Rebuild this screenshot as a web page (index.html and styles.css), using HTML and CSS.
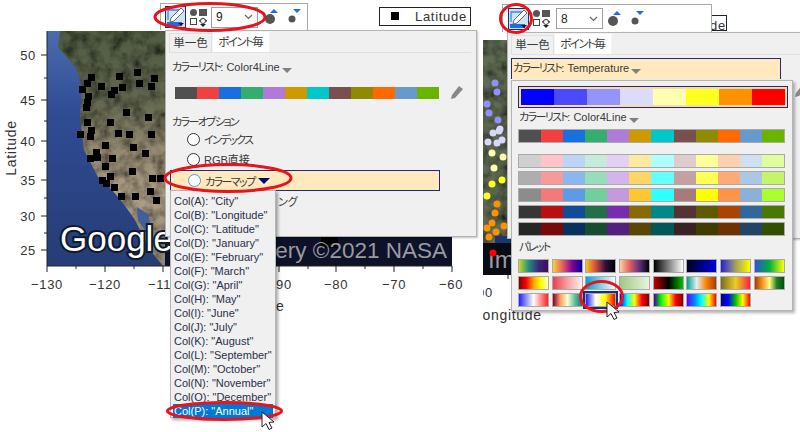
FILE: index.html
```html
<!DOCTYPE html>
<html lang="ja">
<head>
    <meta charset="utf-8">
    <title>カラーマップ</title>
    <link rel="stylesheet" href="styles.css">
</head>
<body>
<div class="desk">

    <!-- the two graphs behind the dialogs -->
    <svg class="chart" width="800" height="432" viewBox="0 0 800 432">
        <defs>
            <linearGradient id="sea" x1="0" y1="0" x2="0" y2="1">
                <stop offset="0" stop-color="#4c6cae"/>
                <stop offset=".35" stop-color="#2f4c94"/>
                <stop offset="1" stop-color="#263c74"/>
            </linearGradient>
            <linearGradient id="land" x1="0" y1="0" x2="0" y2="1">
                <stop offset="0" stop-color="#4f5c42"/>
                <stop offset=".3" stop-color="#646850"/>
                <stop offset=".5" stop-color="#938870"/>
                <stop offset=".7" stop-color="#ae9f86"/>
                <stop offset="1" stop-color="#8f8672"/>
            </linearGradient>
            <filter id="terrain" x="0" y="0" width="100%" height="100%">
                <feTurbulence type="fractalNoise" baseFrequency=".09" numOctaves="3" seed="4"/>
                <feColorMatrix values="0 0 0 0 0  0 0 0 0 0  0 0 0 0 0  1.6 0 0 0 -.55"/>
                <feComposite in2="SourceAlpha" operator="in"/>
                <feMerge>
                    <feMergeNode in="SourceGraphic"/>
                    <feMergeNode/>
                </feMerge>
            </filter>
            <filter id="soft"><feGaussianBlur stdDeviation=".7"/></filter>
            <clipPath id="right-clip"><rect x="483" y="30" width="60" height="300"/></clipPath>
        </defs>

        <!-- left map -->
        <rect x="47" y="31" width="405" height="235" fill="url(#sea)"/>
        <path class="land" d="M60 31 L58 47 L66 56 L77 70 L82 87 L80 117 L82 133 L84 150 L98 177 L112 190 L123 203 L135 220 L150 250 L163 266 L452 266 L452 31 Z"/>
        <path d="M137 207 L148 214 L153 236 L146 232 L138 220 Z" fill="#3f5f9c" filter="url(#soft)"/>
        <g class="pts">
            <rect x="134" y="69" width="7" height="7"/><rect x="116" y="73" width="7" height="7"/><rect x="151" y="75" width="7" height="7"/>
            <rect x="88" y="74" width="7" height="7"/><rect x="84" y="80" width="7" height="7"/><rect x="79" y="86" width="7" height="7"/>
            <rect x="98" y="83" width="7" height="7"/><rect x="85" y="93" width="7" height="7"/><rect x="84" y="99" width="7" height="7"/>
            <rect x="83" y="104" width="7" height="7"/><rect x="119" y="84" width="7" height="7"/><rect x="111" y="87" width="7" height="7"/>
            <rect x="108" y="91" width="7" height="7"/><rect x="136" y="80" width="7" height="7"/><rect x="148" y="83" width="7" height="7"/>
            <rect x="123" y="109" width="7" height="7"/><rect x="145" y="114" width="7" height="7"/><rect x="84" y="119" width="7" height="7"/>
            <rect x="107" y="119" width="7" height="7"/><rect x="88" y="127" width="7" height="7"/><rect x="77" y="131" width="7" height="7"/>
            <rect x="87" y="133" width="7" height="7"/><rect x="115" y="130" width="7" height="7"/><rect x="126" y="131" width="7" height="7"/>
            <rect x="148" y="131" width="7" height="7"/><rect x="102" y="142" width="7" height="7"/><rect x="130" y="144" width="7" height="7"/>
            <rect x="142" y="150" width="7" height="7"/><rect x="93" y="149" width="7" height="7"/><rect x="87" y="155" width="7" height="7"/>
            <rect x="94" y="154" width="7" height="7"/><rect x="109" y="155" width="7" height="7"/><rect x="102" y="163" width="7" height="7"/>
            <rect x="129" y="168" width="7" height="7"/><rect x="107" y="173" width="7" height="7"/><rect x="99" y="177" width="7" height="7"/>
            <rect x="103" y="180" width="7" height="7"/><rect x="111" y="184" width="7" height="7"/><rect x="149" y="175" width="7" height="7"/>
            <rect x="157" y="175" width="7" height="7"/><rect x="147" y="188" width="7" height="7"/><rect x="118" y="193" width="7" height="7"/>
            <rect x="132" y="193" width="7" height="7"/><rect x="153" y="197" width="7" height="7"/>
        </g>
        <rect x="165" y="236" width="287" height="30" fill="#0d1228"/>
        <g class="pts"><rect x="321" y="237" width="9" height="11"/><rect x="329" y="237" width="9" height="11"/></g>
        <text class="credit" x="447" y="258" text-anchor="end">ery ©2021 NASA</text>
        <text class="google" x="60" y="251">Google</text>

        <!-- left axes -->
        <g class="axis">
            <path d="M47 31V266H452"/>
            <path d="M41 55H47M41 100H47M41 141H47M41 180H47M41 216H47M41 250H47M44 78H47M44 121H47M44 161H47M44 198H47M44 233H47"/>
            <path d="M47 266V272M105 266V272M163 266V272M279 266V272M336 266V272M394 266V272M452 266V272M76 266V269M134 266V269M308 266V269M365 266V269M423 266V269"/>
        </g>
        <g class="ticks" text-anchor="end">
            <text x="36" y="60">50</text><text x="36" y="105">45</text><text x="36" y="146">40</text>
            <text x="36" y="185">35</text><text x="36" y="221">30</text><text x="36" y="255">25</text>
        </g>
        <g class="ticks" text-anchor="middle">
            <text x="47" y="289">−130</text><text x="105" y="289">−120</text>
            <text x="336" y="289">−80</text><text x="394" y="289">−70</text><text x="451" y="289">−60</text>
            <text class="title" transform="translate(16 148) rotate(-90)">Latitude</text>
        </g>
        <g class="ticks">
            <text x="148" y="289">−11</text>
            <text x="276" y="289">90</text>
            <text class="title" x="276" y="311">e</text>
        </g>
        <rect class="legend" x="379.500" y="7.500" width="91" height="18"/>
        <rect x="391" y="12" width="8" height="8"/>
        <text class="ticks" x="415" y="21">Latitude</text>

        <!-- right graph, only a strip of it shows -->
        <rect class="land-flat" x="483" y="40" width="28" height="203"/>
        <rect x="495" y="236" width="16" height="7" fill="#1f3570"/>
        <rect x="483" y="243" width="28" height="32" fill="#0a0c14"/>
        <text class="credit wide" x="488" y="268">Im</text>
        <circle cx="493" cy="253" r="3.500" fill="#f00"/>
        <g fill="#8f8fff">
            <circle cx="495" cy="83" r="3.500"/><circle cx="497" cy="92" r="3.500"/><circle cx="487" cy="104" r="3.500"/>
            <circle cx="489" cy="113" r="3.500"/><circle cx="498" cy="120" r="3.500"/>
        </g>
        <g fill="#d8d8ff">
            <circle cx="493" cy="133" r="3.500"/><circle cx="500" cy="129" r="3.500"/><circle cx="499" cy="131" r="3.500"/>
            <circle cx="488" cy="142" r="3.500"/><circle cx="497" cy="143" r="3.500"/><circle cx="502" cy="140" r="3.500"/>
        </g>
        <g fill="#ffffb0">
            <circle cx="492" cy="153" r="3.500"/><circle cx="503" cy="157" r="3.500"/><circle cx="494" cy="168" r="3.500"/>
        </g>
        <g fill="#ffff20">
            <circle cx="492" cy="184" r="3.500"/><circle cx="502" cy="180" r="3.500"/><circle cx="487" cy="196" r="3.500"/>
        </g>
        <g fill="#ff9000">
            <circle cx="497" cy="204" r="3.500"/><circle cx="495" cy="213" r="3.500"/><circle cx="492" cy="223" r="3.500"/>
            <circle cx="487" cy="228" r="3.500"/><circle cx="496" cy="232" r="3.500"/><circle cx="489" cy="237" r="3.500"/>
            <circle cx="504" cy="226" r="3.500"/>
        </g>
        <g class="axis"><path d="M508 275V279"/></g>
        <g class="ticks" clip-path="url(#right-clip)">
            <text x="477" y="297">00</text>
            <text class="title" x="474" y="320">Longitude</text>
        </g>
        <rect class="legend" x="640.500" y="15.500" width="86" height="15"/>
        <text class="ticks" x="710" y="30">de</text>
    </svg>

    <!-- left dialog -->
    <div class="toolbar toolbar-left">
        <button class="pick"><svg width="19" height="20" viewBox="0 0 19 20"><path d="M2 13V3H13" fill="none" stroke="#3b8ad8" stroke-width="1.300"/><path d="M15 1 L18 4 L8 14 L4 15 L5 11 Z" fill="#fff" stroke="#666"/><rect x="1" y="15" width="15" height="4" fill="#1a6fe0"/><path d="M12 16H18L15 19Z" fill="#111"/></svg></button>
        <span class="shapes"><svg width="19" height="19" viewBox="0 0 19 19"><circle cx="4.500" cy="4.500" r="3.500" fill="#555"/><rect x="10" y="1" width="8" height="7" fill="#555"/><rect x="1.500" y="10.500" width="6" height="6" fill="#fff" stroke="#444"/><path d="M10 13 L14 10 L18 13 Z" fill="none" stroke="#444"/><circle cx="14" cy="13" r="2.500" fill="#fff" stroke="#444"/><path d="M11 16H17L14 19Z" fill="#222"/></svg></span>
        <span class="combo"><span>9</span><svg width="9" height="6" viewBox="0 0 9 6"><path d="M1 1 L4.500 4.500 L8 1" fill="none" stroke="#666" stroke-width="1.200"/></svg></span>
        <svg class="mark" width="20" height="18" viewBox="0 0 20 18"><circle cx="7" cy="11" r="5" fill="#555"/><path d="M7 4 L11 0 L15 4Z" fill="#1a6fe0" transform="translate(0 1)"/></svg>
        <svg class="mark" width="20" height="18" viewBox="0 0 20 18"><circle cx="7" cy="11" r="3.500" fill="#555"/><path d="M8 1H16L12 5Z" fill="#1a6fe0"/></svg>
    </div>

    <div class="popup popup-left">
        <div class="tabs">
            <span class="tab">単一色</span>
            <span class="tab active"><span class="kana">ポイント</span>毎</span>
        </div>
        <div class="label"><span class="kana">カラーリスト</span>: Color4Line<i class="caret"></i></div>
        <div class="swatch-row">
            <div class="ramp base"></div>
            <svg class="pen" width="14" height="16" viewBox="0 0 14 16"><path d="M9 1 L13 4 L5 13 L1 14 L2 10 Z" fill="#888"/></svg>
        </div>
        <div class="section"><span class="kana">カラーオプション</span></div>
        <div class="options">
            <div class="option"><i class="radio"></i><span class="kana">インデックス</span></div>
            <div class="option"><i class="radio"></i>RGB直接</div>
            <div class="option current"><i class="radio"></i><span class="kana">カラーマップ</span><i class="caret navy"></i></div>
            <div class="option tail">ング</div>
        </div>
        <ul class="columns">
            <li>Col(A): "City"</li>
            <li>Col(B): "Longitude"</li>
            <li>Col(C): "Latitude"</li>
            <li>Col(D): "January"</li>
            <li>Col(E): "February"</li>
            <li>Col(F): "March"</li>
            <li>Col(G): "April"</li>
            <li>Col(H): "May"</li>
            <li>Col(I): "June"</li>
            <li>Col(J): "July"</li>
            <li>Col(K): "August"</li>
            <li>Col(L): "September"</li>
            <li>Col(M): "October"</li>
            <li>Col(N): "November"</li>
            <li>Col(O): "December"</li>
            <li class="picked">Col(P): "Annual"</li>
        </ul>
    </div>

    <!-- right dialog -->
    <div class="toolbar toolbar-right">
        <button class="pick"><svg width="19" height="20" viewBox="0 0 19 20"><path d="M2 13V3H13" fill="none" stroke="#3b8ad8" stroke-width="1.300"/><path d="M15 1 L18 4 L8 14 L4 15 L5 11 Z" fill="#fff" stroke="#666"/><rect x="1" y="15" width="15" height="4" fill="#1a6fe0"/><path d="M12 16H18L15 19Z" fill="#111"/></svg></button>
        <span class="shapes"><svg width="19" height="19" viewBox="0 0 19 19"><circle cx="4.500" cy="4.500" r="3.500" fill="#555"/><rect x="10" y="1" width="8" height="7" fill="#555"/><rect x="1.500" y="10.500" width="6" height="6" fill="#fff" stroke="#444"/><path d="M10 13 L14 10 L18 13 Z" fill="none" stroke="#444"/><circle cx="14" cy="13" r="2.500" fill="#fff" stroke="#444"/><path d="M11 16H17L14 19Z" fill="#222"/></svg></span>
        <span class="combo"><span>8</span><svg width="9" height="6" viewBox="0 0 9 6"><path d="M1 1 L4.500 4.500 L8 1" fill="none" stroke="#666" stroke-width="1.200"/></svg></span>
        <svg class="mark" width="20" height="18" viewBox="0 0 20 18"><circle cx="7" cy="11" r="5" fill="#555"/><path d="M7 4 L11 0 L15 4Z" fill="#1a6fe0" transform="translate(0 1)"/></svg>
        <svg class="mark" width="20" height="18" viewBox="0 0 20 18"><circle cx="7" cy="11" r="3.500" fill="#555"/><path d="M8 1H16L12 5Z" fill="#1a6fe0"/></svg>
    </div>

    <div class="popup popup-right">
        <div class="tabs">
            <span class="tab">単一色</span>
            <span class="tab active"><span class="kana">ポイント</span>毎</span>
        </div>
        <div class="label current-list"><span class="kana">カラーリスト</span>: Temperature<i class="caret"></i></div>
        <svg class="pen pen-edge" width="14" height="16" viewBox="0 0 14 16"><path d="M9 1 L13 4 L5 13 L1 14 L2 10 Z" fill="#888"/></svg>
        <div class="lists">
            <div class="selected-ramp"><div class="ramp temperature"></div></div>
            <div class="label sub"><span class="kana">カラーリスト</span>: Color4Line<i class="caret"></i></div>
            <div class="ramp base framed"></div>
            <div class="tints">
                <div class="ramp tint1 framed"></div>
                <div class="ramp tint2 framed"></div>
                <div class="ramp tint3 framed"></div>
                <div class="ramp shade1 framed"></div>
                <div class="ramp shade2 framed"></div>
            </div>
            <div class="label palette-title"><span class="kana">パレット</span></div>
            <div class="palettes">
                <i class="p1"></i><i class="p2"></i><i class="p3"></i><i class="p4"></i><i class="p5"></i><i class="p6"></i><i class="p7"></i><i class="p8"></i>
                <i class="p9"></i><i class="p10"></i><i class="p11"></i><i class="p12"></i><i class="p13"></i><i class="p14"></i><i class="p15"></i><i class="p16"></i>
                <i class="p17"></i><i class="p18"></i><i class="p19 on"></i><i class="p20"></i><i class="p21"></i><i class="p22"></i><i class="p23"></i>
            </div>
        </div>
    </div>

    <!-- red rings and mouse pointers drawn over everything -->
    <svg class="marks" width="800" height="432" viewBox="0 0 800 432">
        <g class="ring">
            <ellipse cx="210" cy="17" rx="55" ry="13.500"/>
            <ellipse cx="228" cy="178" rx="63" ry="13.500"/>
            <ellipse cx="224.500" cy="411" rx="57" ry="8.500"/>
            <ellipse cx="516" cy="18.500" rx="15.500" ry="14"/>
            <ellipse cx="601.500" cy="296.500" rx="21" ry="15"/>
        </g>
        <path class="arrow" d="M262 412V427L266 423.500L269 429.500L272 428L269 422.500L274 422Z"/>
        <path class="arrow" d="M607 302V317L611 313.500L614 319.500L617 318L614 312.500L619 312Z"/>
    </svg>
</div>
</body>
</html>
```

FILE: styles.css
```css
* {
    box-sizing: border-box;
}
body {
    margin: 0;
    background: #fff;
    font-family: "Liberation Sans", "Noto Sans CJK JP", sans-serif;
    font-size: 11px;
    color: #3a3a3a;
}
i {
    display: inline-block;
}
.desk {
    position: relative;
    width: 800px;
    height: 432px;
    overflow: hidden;
}

/* graphs */
.chart,
.marks {
    position: absolute;
    left: 0;
    top: 0;
}
.land {
    fill: url(#land);
    filter: url(#terrain);
}
.land-flat {
    fill: #5f6a52;
    filter: url(#terrain);
}
.pts {
    fill: #000;
}
.axis path {
    fill: none;
    stroke: #222;
    stroke-width: 1;
}
.ticks text,
text.ticks {
    font-size: 13px;
    letter-spacing: .7px;
    fill: #333;
}
.ticks .title {
    font-size: 14px;
}
.legend {
    fill: #fff;
    stroke: #222;
}
.credit {
    font-size: 22.500px;
    fill: #9a9aa2;
}
.credit.wide {
    font-size: 24px;
}
.google {
    font-size: 35px;
    fill: #fff;
    stroke: #10182c;
    stroke-width: 4px;
    paint-order: stroke;
}

/* toolbars */
.toolbar {
    position: absolute;
    display: flex;
    align-items: center;
    height: 27px;
    padding-left: 4px;
    background: #fff;
    border: 1px solid #a8a8a8;
    border-bottom: 0;
}
.toolbar-left {
    left: 160px;
    top: 3px;
    width: 148px;
}
.toolbar-right {
    left: 502px;
    top: 4px;
    width: 210px;
    height: 28px;
    padding-left: 5px;
}
.pick {
    width: 21px;
    height: 22px;
    padding: 0;
    display: flex;
    align-items: center;
    justify-content: center;
    background: #cde4f7;
    border: 1px solid #1c2a80;
}
.shapes {
    display: flex;
    margin-left: 3px;
}
.combo {
    display: flex;
    align-items: center;
    justify-content: space-between;
    width: 47px;
    height: 21px;
    margin: 0 5px 0 3px;
    padding: 0 4px;
    border: 1px solid #a0a0a0;
    color: #222;
    font-size: 12px;
}
.toolbar-right .combo {
    margin: 0 3px 0 5px;
}
.mark {
    margin-right: 2px;
}

/* dialogs */
.popup {
    position: absolute;
    height: 207px;
    background: #f0f0f0;
    border: 1px solid #b4b4b4;
    box-shadow: 1px 1px 2px rgba(0, 0, 0, .25);
    font-feature-settings: "palt";
}
.popup-left {
    left: 165px;
    top: 30px;
    width: 312px;
}
.popup-right {
    left: 507px;
    top: 32px;
    width: 320px;
}
.kana {
    letter-spacing: -1.600px;
}
.tabs {
    display: flex;
    align-items: flex-end;
    height: 21px;
    margin: 1px 5px 0 3px;
    padding-left: 0;
    border-bottom: 1px solid #e2e2e2;
}
.tab {
    width: 43px;
    height: 19px;
    line-height: 18px;
    text-align: center;
    font-size: 11.500px;
    background: #f0f0f0;
    border: 1px solid #e0e0e0;
    border-bottom: 0;
}
.tab.active {
    width: 58px;
    height: 21px;
    line-height: 20px;
    background: #fff;
    border-color: #f4f4f4;
}
.label {
    height: 16px;
    line-height: 16px;
    margin: 6px 0 0 6px;
    white-space: nowrap;
}
.caret {
    width: 0;
    height: 0;
    margin-left: 2px;
    vertical-align: -2px;
    border: 5px solid transparent;
    border-top: 5px solid #808080;
    border-bottom: 0;
}
.caret.navy {
    margin-left: 3px;
    border-width: 6px 5px 0;
    border-top-color: #00007f;
    border-left-width: 6px;
    border-right-width: 6px;
    vertical-align: -3px;
}
.swatch-row {
    display: flex;
    align-items: center;
    margin: 10px 0 0 9px;
}
.ramp {
    height: 14px;
}
.swatch-row .ramp {
    width: 264px;
    height: 12px;
}
.pen {
    margin-left: 11px;
}
.pen-edge {
    position: absolute;
    left: 286px;
    top: 50px;
    margin: 0;
}
.section {
    height: 16px;
    line-height: 16px;
    margin: 13px 0 0 6px;
}
.options {
    margin-top: -1px;
}
.option {
    display: flex;
    align-items: center;
    height: 20px;
    padding-left: 21px;
    white-space: nowrap;
}
.option.current {
    width: 270px;
    height: 21px;
    margin: 1px 0 0 4px;
    padding-left: 17px;
    background: #ffe9bd;
    border: 1px solid #1c2a80;
}
.option.tail {
    padding-left: 112px;
}
.radio {
    width: 13px;
    height: 13px;
    margin-right: 4px;
    background: #fff;
    border: 1.500px solid #333;
    border-radius: 50%;
}
.current .radio {
    border-color: #3d9be8;
}

/* column drop down */
.columns {
    position: absolute;
    left: 4px;
    top: 159px;
    width: 106px;
    height: 228px;
    margin: 0;
    padding: 3px 2px 0 2px;
    list-style: none;
    background: #f0f0f0;
    border: 1px solid #b4b4b4;
    box-shadow: 2px 2px 3px rgba(0, 0, 0, .35);
    color: #2b2f48;
}
.columns li {
    height: 14px;
    line-height: 14px;
    padding-left: 1px;
    white-space: nowrap;
}
.columns .picked {
    background: #0078d7;
    color: #fff;
}

/* colour lists */
.current-list {
    width: 270px;
    height: 21px;
    line-height: 19px;
    margin: 3px 0 0 3px;
    padding-left: 1px;
    background: #ffe9bd;
    border: 1px solid #1c2a80;
    border-bottom: 0;
}
.lists {
    position: absolute;
    left: 3px;
    top: 47px;
    width: 282px;
    height: 231px;
    padding: 5px 6px 0 6px;
    background: #f0f0f0;
    border: 1px solid #b4b4b4;
    box-shadow: 2px 2px 3px rgba(0, 0, 0, .3);
}
.selected-ramp {
    width: 270px;
    height: 22px;
    padding: 2px;
    background: #ffd9a0;
    border: 1px solid #1c2a80;
}
.selected-ramp .ramp {
    height: 16px;
}
.label.sub {
    margin: 1px 0 0 1px;
}
.framed {
    width: 267px;
    border: 1px solid #aaa;
}
.lists > .framed {
    margin-top: 4px;
}
.tints {
    display: flex;
    flex-direction: column;
    gap: 3px;
    margin-top: 11px;
}
.palette-title {
    margin: 3px 0 0 1px;
}
.palettes {
    display: grid;
    grid-template-columns: repeat(8, 31px);
    grid-auto-rows: 14px;
    column-gap: 2.700px;
    row-gap: 3px;
    margin-top: 4px;
}
.palettes i {
    border: 1px solid #aaa;
}
.palettes .on {
    outline: 2px solid #1c2a80;
    outline-offset: 0;
}

.base {
    background: linear-gradient(to right, #505050 8.33%, #f04040 0 16.67%, #1a6fe0 0 25%, #35ad6e 0 33.33%, #b07ad8 0 41.67%, #cc9900 0 50%, #00c8c8 0 58.33%, #7a4f4f 0 66.67%, #8f8a00 0 75%, #ff6a00 0 83.33%, #6699cc 0 91.67%, #6ab400 0);
}
.tint1 {
    background: linear-gradient(to right, #d0d0d0 8.33%, #ffc4c8 0 16.67%, #bcd4f8 0 25%, #c4ecd8 0 33.33%, #e4d0f4 0 41.67%, #ffe8a0 0 50%, #b0ffff 0 58.33%, #e0cccc 0 66.67%, #ffff99 0 75%, #ffd0b0 0 83.33%, #d0e0f0 0 91.67%, #deff99 0);
}
.tint2 {
    background: linear-gradient(to right, #aeaeae 8.33%, #f89a9a 0 16.67%, #8cb6f0 0 25%, #98dcb8 0 33.33%, #d4b4ea 0 41.67%, #ffd666 0 50%, #66ffff 0 58.33%, #c4a0a0 0 66.67%, #ffff55 0 75%, #ffaa77 0 83.33%, #aac8e4 0 91.67%, #c4f566 0);
}
.tint3 {
    background: linear-gradient(to right, #8c8c8c 8.33%, #f47a7a 0 16.67%, #5f9ae8 0 25%, #70d09c 0 33.33%, #c499e0 0 41.67%, #ffc72e 0 50%, #2effff 0 58.33%, #a87a7a 0 66.67%, #ffff00 0 75%, #ff9448 0 83.33%, #8cb0d8 0 91.67%, #aaff2e 0);
}
.shade1 {
    background: linear-gradient(to right, #363636 8.33%, #b81010 0 16.67%, #104c98 0 25%, #227048 0 33.33%, #7a2cb0 0 41.67%, #886a00 0 50%, #008888 0 58.33%, #553333 0 66.67%, #5f5a00 0 75%, #a84500 0 83.33%, #336699 0 91.67%, #4a7800 0);
}
.shade2 {
    background: linear-gradient(to right, #262626 8.33%, #7a0808 0 16.67%, #0a3060 0 25%, #164c30 0 33.33%, #542080 0 41.67%, #5a4600 0 50%, #005858 0 58.33%, #3a2222 0 66.67%, #403c00 0 75%, #703000 0 83.33%, #224466 0 91.67%, #304f00 0);
}
.temperature {
    background: linear-gradient(to right, #0000ff 12.5%, #4a4aff 0 25%, #9494ff 0 37.5%, #dcdcff 0 50%, #ffffb0 0 62.5%, #ffff20 0 75%, #ff9000 0 87.5%, #ff0000 0);
}

/* palette thumbnails */
.p1 { background: linear-gradient(to right, #c8d820, #20907f, #3a2a7a, #3b0f5e); }
.p2 { background: linear-gradient(to right, #ffd030, #e06060, #8000a0, #000090); }
.p3 { background: linear-gradient(to right, #f8c020, #d05040, #301040, #000); }
.p4 { background: linear-gradient(to right, #ffd0a0, #e06060, #603080, #000); }
.p5 { background: linear-gradient(to right, #000, #fff); }
.p6 { background: linear-gradient(to right, #000020, #0000e0); }
.p7 { background: linear-gradient(to right, #2020e0, #a0a060, #ffff00); }
.p8 { background: linear-gradient(to right, #3050d0, #00b040, #ffff00); }
.p9 { background: linear-gradient(to right, #800000, #ff0000, #ffa000, #ffff00, #ffffc0); }
.p10 { background: linear-gradient(to right, #e84050, #f8a0a0, #fff0f0); }
.p11 { background: linear-gradient(to right, #00a0d8, #80d0e8, #f0ffff); }
.p12 { background: linear-gradient(to right, #a0c880, #e8f4e0); }
.p13 { background: linear-gradient(to right, #c00000, #000, #00c000); }
.p14 { background: linear-gradient(to right, #00a090, #e0f0f0, #ff8000, #a04000); }
.p15 { background: linear-gradient(to right, #806820, #e8d020, #ff2040); }
.p16 { background: linear-gradient(to right, #a04000, #ff9020, #ffff80, #208020, #005010); }
.p17 { background: linear-gradient(to right, #2020ff, #fff, #ff2020); }
.p18 { background: linear-gradient(to right, #800030, #ffa060, #ffffd0, #60c0a0, #207070); }
.p19 { background: linear-gradient(to right, #2020ff, #fff, #ffff00, #ff0000); }
.p20 { background: linear-gradient(to right, #0000ff, #00ffff, #ffff00, #ff0000, #800000); }
.p21 { background: linear-gradient(to right, #4000a0, #00ff00, #ffff00, #ff0000, #800000); }
.p22 { background: linear-gradient(to right, #6000ff, #0080ff, #00ffff, #ffff00, #ff0000); }
.p23 { background: linear-gradient(to right, #000080, #0000ff, #00c000, #ffff00, #ff0000); }

/* marks on top */
.marks {
    pointer-events: none;
}
.ring ellipse {
    fill: none;
    stroke: #e8141c;
    stroke-width: 3;
}
.arrow {
    fill: #fff;
    stroke: #222;
    stroke-width: 1;
}
```
